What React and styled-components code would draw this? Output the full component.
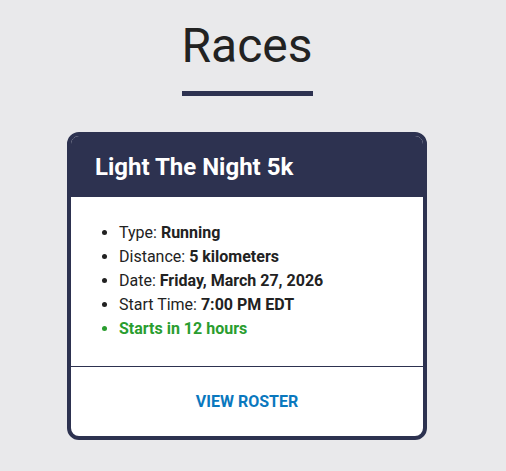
import React from "react";
import styled, { createGlobalStyle } from "styled-components";

const navy = "#2d3250";

const GlobalStyle = createGlobalStyle`
  body {
    margin: 0;
    background: #e9e9eb;
    font-family: Roboto, "Liberation Sans", sans-serif;
    color: #222;
  }
`;

const Page = styled.main`
  width: 494px;
  display: flex;
  flex-direction: column;
  align-items: center;
  padding-top: 18px;
`;

const Title = styled.h1`
  margin: 0;
  font-size: 48px;
  font-weight: 400;
  line-height: 56px;
  color: #222;
`;

const Underline = styled.div`
  width: 131px;
  height: 5px;
  background: ${navy};
  margin: 17px 0 36px;
`;

const Card = styled.section`
  width: 360px;
  box-sizing: border-box;
  border: 4px solid ${navy};
  border-radius: 12px;
  background: #fff;
  overflow: hidden;
`;

const CardHeader = styled.header`
  background: ${navy};
  color: #fff;
  height: 61px;
  display: flex;
  align-items: center;
  padding-left: 24px;
  h2 {
    margin: 0;
    font-size: 24px;
    font-weight: 700;
  }
`;

const Details = styled.ul`
  margin: 0;
  padding: 24px 0 25px 48px;
  font-size: 16px;
  line-height: 24px;
  border-bottom: 1px solid ${navy};
  li b {
    font-weight: 700;
  }
`;

const Countdown = styled.li`
  color: #2a9d2f;
  font-weight: 700;
`;

const Actions = styled.div`
  display: flex;
  justify-content: center;
  align-items: center;
  height: 69px;
`;

const LinkButton = styled.a`
  color: #0a78be;
  font-size: 16px;
  font-weight: 700;
  text-decoration: none;
`;

export default function App() {
  return (
    <>
      <GlobalStyle />
      <Page>
        <Title>Races</Title>
        <Underline />
        <Card>
          <CardHeader>
            <h2>Light The Night 5k</h2>
          </CardHeader>
          <Details>
            <li>
              Type: <b>Running</b>
            </li>
            <li>
              Distance: <b>5 kilometers</b>
            </li>
            <li>
              Date: <b>Friday, March 27, 2026</b>
            </li>
            <li>
              Start Time: <b>7:00 PM EDT</b>
            </li>
            <Countdown>Starts in 12 hours</Countdown>
          </Details>
          <Actions>
            <LinkButton href="#roster">VIEW ROSTER</LinkButton>
          </Actions>
        </Card>
      </Page>
    </>
  );
}
